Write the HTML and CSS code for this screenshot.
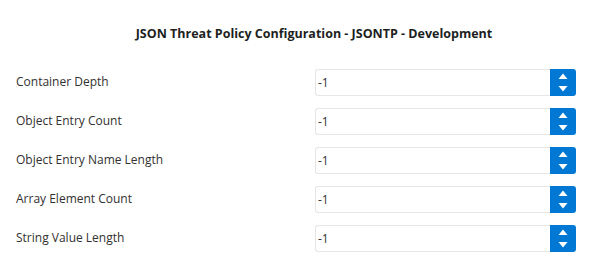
FILE: index.html
```html
<!DOCTYPE html>
<html lang="en">
<head>
  <meta charset="UTF-8" />
  <title>JSON Threat Policy Configuration</title>
  <link rel="stylesheet" href="styles.css">
</head>
<body>
  <main class="policy">
    <h1 class="policy-title">JSON Threat Policy Configuration - JSONTP - Development</h1>

    <form class="policy-form">
      <label class="field-label" for="depth">Container Depth</label>
      <div class="spin">
        <input class="spin-input" id="depth" type="text" value="-1" />
        <button class="spin-btn" type="button" aria-label="Change value">
          <svg width="10" height="19" viewBox="0 0 10 19"><path d="M5 0.5L9.5 6H0.5Z M5 18.5L9.5 13H0.5Z" fill="#fff"/></svg>
        </button>
      </div>

      <label class="field-label" for="entries">Object Entry Count</label>
      <div class="spin">
        <input class="spin-input" id="entries" type="text" value="-1" />
        <button class="spin-btn" type="button" aria-label="Change value">
          <svg width="10" height="19" viewBox="0 0 10 19"><path d="M5 0.5L9.5 6H0.5Z M5 18.5L9.5 13H0.5Z" fill="#fff"/></svg>
        </button>
      </div>

      <label class="field-label" for="namelen">Object Entry Name Length</label>
      <div class="spin">
        <input class="spin-input" id="namelen" type="text" value="-1" />
        <button class="spin-btn" type="button" aria-label="Change value">
          <svg width="10" height="19" viewBox="0 0 10 19"><path d="M5 0.5L9.5 6H0.5Z M5 18.5L9.5 13H0.5Z" fill="#fff"/></svg>
        </button>
      </div>

      <label class="field-label" for="elements">Array Element Count</label>
      <div class="spin">
        <input class="spin-input" id="elements" type="text" value="-1" />
        <button class="spin-btn" type="button" aria-label="Change value">
          <svg width="10" height="19" viewBox="0 0 10 19"><path d="M5 0.5L9.5 6H0.5Z M5 18.5L9.5 13H0.5Z" fill="#fff"/></svg>
        </button>
      </div>

      <label class="field-label" for="strlen">String Value Length</label>
      <div class="spin">
        <input class="spin-input" id="strlen" type="text" value="-1" />
        <button class="spin-btn" type="button" aria-label="Change value">
          <svg width="10" height="19" viewBox="0 0 10 19"><path d="M5 0.5L9.5 6H0.5Z M5 18.5L9.5 13H0.5Z" fill="#fff"/></svg>
        </button>
      </div>
    </form>
  </main>
</body>
</html>
```

FILE: styles.css
```css
/* Base */
*, *::before, *::after {
  box-sizing: border-box;
}
body {
  margin: 0;
  background: #fff;
  color: #323130;
  font-family: 'Open Sans', 'Noto Sans', sans-serif;
}

.policy {
  padding: 25px 2px 0 16px;
}

/* Heading */
.policy-title {
  margin: 0 0 26px;
  text-align: center;
  font-size: 12.5px;
  font-weight: 700;
  line-height: 18px;
  color: #201f1e;
}

/* Form grid */
.policy-form {
  display: grid;
  grid-template-columns: 299px 261px;
  row-gap: 12px;
  align-items: center;
}

.field-label {
  font-size: 12px;
  color: #323130;
  margin-top: -3px;
}

/* Spin input */
.spin {
  display: flex;
  height: 27px;
}

.spin-input {
  flex: 1;
  min-width: 0;
  height: 100%;
  margin: 0;
  padding: 0 2px;
  border: 1px solid #e6e6e6;
  border-right: none;
  border-radius: 3px 0 0 3px;
  font-family: inherit;
  font-size: 12px;
  color: #323130;
  background: #fff;
}

.spin-btn {
  width: 26px;
  height: 100%;
  padding: 0;
  border: none;
  border-radius: 0 3px 3px 0;
  background: #0078d4;
  display: flex;
  align-items: center;
  justify-content: center;
  cursor: pointer;
}
```
